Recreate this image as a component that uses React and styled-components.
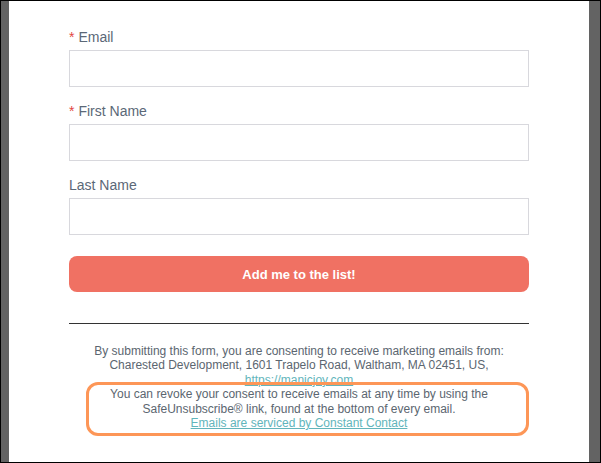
import React from 'react';
import styled, { createGlobalStyle } from 'styled-components';

const fields = [
  { name: 'email', label: 'Email', required: true },
  { name: 'firstName', label: 'First Name', required: true },
  { name: 'lastName', label: 'Last Name', required: false },
];

export default function App() {
  return (
    <>
      <GlobalStyle />
      <Frame>
        <SideBar />
        <Card>
          <Form>
            {fields.map(({ name, label, required }) => (
              <Field key={name}>
                <Label htmlFor={name}>
                  {required && <Star>*</Star>}
                  {label}
                </Label>
                <Input id={name} type="text" />
              </Field>
            ))}
            <SubmitButton type="button">Add me to the list!</SubmitButton>
            <Divider />
            <Disclaimer>
              By submitting this form, you are consenting to receive marketing emails from:
              <br />
              Charested Development, 1601 Trapelo Road, Waltham, MA 02451, US,
              <br />
              <TealLink href="#">https://manicjoy.com</TealLink>
            </Disclaimer>
            <Highlight>
              <Disclaimer $inset>
                You can revoke your consent to receive emails at any time by using the
                <br />
                SafeUnsubscribe® link, found at the bottom of every email.
                <br />
                <TealLink href="#">Emails are serviced by Constant Contact</TealLink>
              </Disclaimer>
            </Highlight>
          </Form>
        </Card>
        <SideBar $wide />
      </Frame>
    </>
  );
}

const GlobalStyle = createGlobalStyle`
  html, body {
    margin: 0;
    padding: 0;
    background: #fff;
  }

  * {
    box-sizing: border-box;
  }
`;

const Frame = styled.div`
  display: flex;
  width: 601px;
  height: 463px;
  border: 1px solid #000;
  overflow: hidden;
  font-family: 'Liberation Sans', Arial, sans-serif;
`;

const SideBar = styled.div`
  flex: 0 0 ${({ $wide }) => ($wide ? '11px' : '8px')};
  background: #636363;
`;

const Card = styled.div`
  flex: 1;
  background: #fff;
  padding: 28px 60px 0;
`;

const Form = styled.form`
  display: flex;
  flex-direction: column;
  width: 460px;
`;

const Field = styled.div`
  display: flex;
  flex-direction: column;
  margin-bottom: 16px;
`;

const Label = styled.label`
  font-size: 14px;
  line-height: 17px;
  color: #5b6877;
  margin-bottom: 4px;
`;

const Star = styled.span`
  color: #e2473f;
  margin-right: 4px;
`;

const Input = styled.input`
  height: 37px;
  width: 100%;
  border: 1px solid #d8d8dd;
  background: #fff;
  outline: none;
`;

const SubmitButton = styled.button`
  margin-top: 5px;
  height: 36px;
  border: none;
  border-radius: 8px;
  background: #f07163;
  color: #fff;
  font-family: inherit;
  font-size: 13px;
  font-weight: bold;
`;

const Divider = styled.hr`
  margin: 31px 0 20px;
  border: none;
  border-top: 1px solid #333;
`;

const Disclaimer = styled.p`
  margin: ${({ $inset }) => ($inset ? '0 -3px 0 -20px' : '0')};
  text-align: center;
  font-size: 12px;
  line-height: 14.4px;
  color: #5b6670;
`;

const TealLink = styled.a`
  color: #62b5bb;
  text-decoration: underline;
`;

const Highlight = styled.div`
  margin: -5px 0 0 17px;
  padding: 2px 0 3px;
  border: 3px solid #fd9657;
  border-radius: 12px;
`;
